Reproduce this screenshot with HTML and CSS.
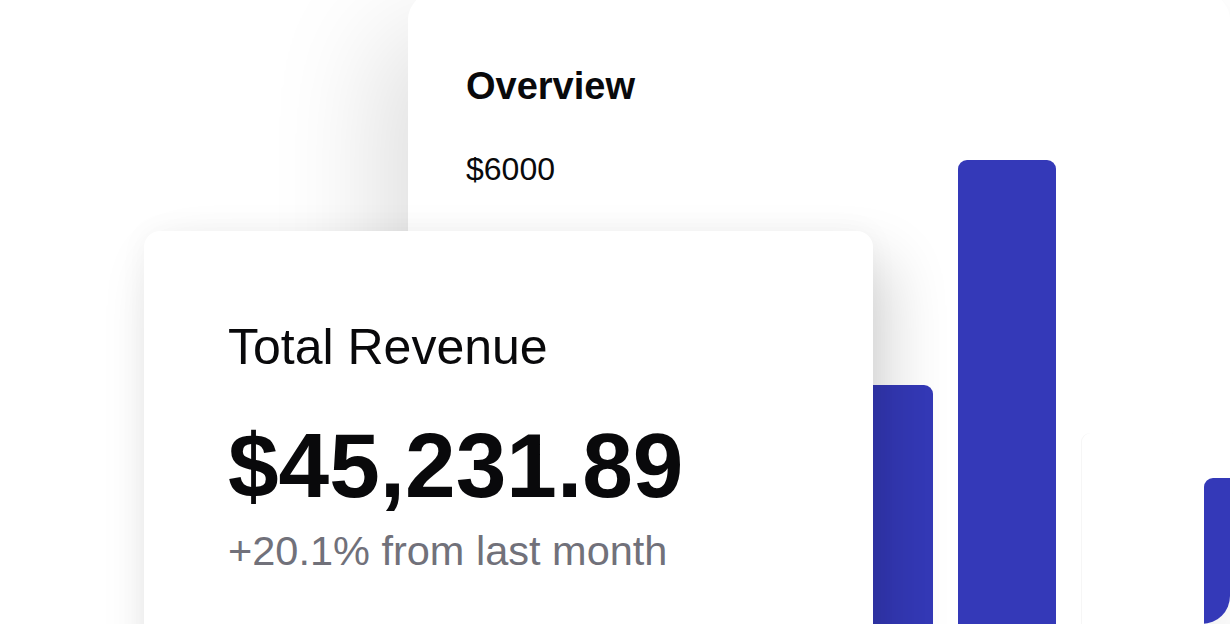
FILE: index.html
```html
<!DOCTYPE html>
<html lang="en">
<head>
<meta charset="utf-8">
<title>Revenue overview</title>
<link rel="stylesheet" href="styles.css">
</head>
<body>
<main class="stage">
  <section class="overview-card">
    <h2 class="overview-title">Overview</h2>
    <div class="axis-label">$6000</div>
    <div class="chart">
      <div class="bar" style="height:300px"></div>
      <div class="bar" style="height:200px"></div>
      <div class="bar" style="height:330px"></div>
      <div class="bar" style="height:239px"></div>
      <div class="bar" style="height:464px"></div>
      <div class="bar bar-empty" style="height:191px"></div>
      <div class="bar" style="height:146px"></div>
    </div>
  </section>
  <section class="revenue-card">
    <h3 class="revenue-title">Total Revenue</h3>
    <div class="revenue-amount">$45,231.89</div>
    <div class="revenue-change">+20.1% from last month</div>
  </section>
</main>
</body>
</html>
```

FILE: styles.css
```css
* { box-sizing: border-box; }
html, body {
  margin: 0;
  padding: 0;
  background: #ffffff;
}
body {
  font-family: "Liberation Sans", Arial, sans-serif;
  color: #09090b;
}
.stage {
  position: relative;
  width: 1230px;
  height: 624px;
  overflow: hidden;
  background: #ffffff;
}
.overview-card {
  position: absolute;
  left: 408px;
  top: -8px;
  width: 822px;
  height: 632px;
  background: #ffffff;
  border-radius: 28px;
  overflow: hidden;
  display: flex;
  flex-direction: column;
  padding: 75px 0 0 58px;
  box-shadow: -30px 40px 110px rgba(0, 0, 0, 0.13);
}
.overview-title {
  margin: 0;
  font-size: 38px;
  line-height: 38px;
  font-weight: 700;
}
.axis-label {
  margin-top: 48px;
  font-size: 32px;
  line-height: 32px;
}
.chart {
  flex: 1;
  min-height: 0;
  display: flex;
  align-items: flex-end;
  gap: 25px;
}
.bar {
  flex: 0 0 98px;
  background: #3439b8;
  border-radius: 9px 9px 0 0;
}
.bar-empty {
  background: #ffffff;
  box-shadow: inset 1px 0 0 #f6f6f6;
}
.revenue-card {
  position: absolute;
  left: 144px;
  top: 231px;
  width: 729px;
  height: 460px;
  background: #ffffff;
  border-radius: 16px;
  padding: 91px 0 0 84px;
  box-shadow: 18px 30px 60px rgba(0, 0, 0, 0.16), 0 0 30px rgba(0, 0, 0, 0.04);
}
.revenue-title {
  margin: 0;
  font-size: 50px;
  line-height: 50px;
  font-weight: 400;
}
.revenue-amount {
  margin-top: 48px;
  font-size: 91px;
  line-height: 91px;
  font-weight: 700;
}
.revenue-change {
  margin-top: 19px;
  font-size: 41.5px;
  line-height: 41.5px;
  color: #71717a;
}
```
